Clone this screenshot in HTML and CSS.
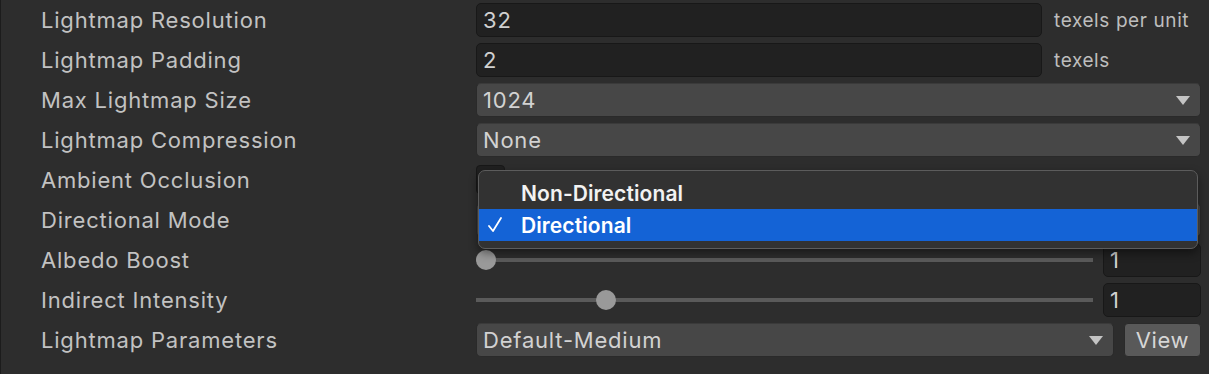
FILE: index.html
```html
<!DOCTYPE html>
<html lang="en">
<head>
  <meta charset="UTF-8">
  <title>Lightmapping Settings</title>
  <link rel="stylesheet" href="styles.css">
</head>
<body>

  <div class="inspector">
    <div class="row">
      <span class="label">Lightmap Resolution</span>
      <div class="control">
        <div class="field wide">32</div>
        <span class="suffix">texels per unit</span>
      </div>
    </div>
    <div class="row">
      <span class="label">Lightmap Padding</span>
      <div class="control">
        <div class="field wide">2</div>
        <span class="suffix">texels</span>
      </div>
    </div>
    <div class="row">
      <span class="label">Max Lightmap Size</span>
      <div class="control">
        <div class="dropdown">1024<span class="arrow"></span></div>
      </div>
    </div>
    <div class="row">
      <span class="label">Lightmap Compression</span>
      <div class="control">
        <div class="dropdown">None<span class="arrow"></span></div>
      </div>
    </div>
    <div class="row">
      <span class="label">Ambient Occlusion</span>
      <div class="control">
        <div class="toggle"></div>
      </div>
    </div>
    <div class="row">
      <span class="label">Directional Mode</span>
      <div class="control">
        <!-- covered by the open menu -->
        <div class="dropdown"><span class="arrow"></span></div>
      </div>
    </div>
    <div class="row">
      <span class="label">Albedo Boost</span>
      <div class="control">
        <div class="slider"><span class="knob" style="left: 0%"></span></div>
        <div class="field number">1</div>
      </div>
    </div>
    <div class="row">
      <span class="label">Indirect Intensity</span>
      <div class="control">
        <div class="slider"><span class="knob" style="left: 19.4%"></span></div>
        <div class="field number">1</div>
      </div>
    </div>
    <div class="row">
      <span class="label">Lightmap Parameters</span>
      <div class="control">
        <div class="dropdown">Default-Medium<span class="arrow"></span></div>
        <div class="button">View</div>
      </div>
    </div>

    <!-- open menu for Directional Mode -->
    <div class="menu">
      <div class="menu-item"><span class="check"></span>Non-Directional</div>
      <div class="menu-item selected">
        <span class="check">
          <svg width="14" height="16" viewBox="0 0 14 16"><polyline points="1,9 5,14 13,1" fill="none" stroke="#fff" stroke-width="1.8" stroke-linecap="round" stroke-linejoin="round"/></svg>
        </span>Directional
      </div>
    </div>
  </div>

</body>
</html>
```

FILE: styles.css
```css
body {
  margin: 0;
  background-color: #2d2d2d;
  font-family: Inter, "Noto Sans", sans-serif;
  color: #c4c4c4;
}
.inspector {
  position: relative;
  height: 374px;
  border-left: 1px solid #1c1c1c;
}
.row {
  display: grid;
  grid-template-columns: 475px 1fr;
  height: 40px;
  align-items: center;
}
.label {
  padding-left: 40px;
  font-size: 22px;
  letter-spacing: 0.8px;
  color: #c2c2c2;
}
.control {
  display: flex;
  align-items: center;
  gap: 10px;
  padding-right: 8px;
  height: 34px;
}
.field {
  box-sizing: border-box;
  height: 34px;
  padding: 0 6px;
  background-color: #212121;
  border: 1px solid #181818;
  border-radius: 5px;
  font-size: 22px;
  letter-spacing: 0.8px;
  color: #d0d0d0;
  display: flex;
  align-items: center;
}
.field.wide {
  width: 566px;
}
.field.number {
  width: 98px;
  flex-shrink: 0;
}
.suffix {
  margin-left: 2px;
  font-size: 19px;
  letter-spacing: 0.6px;
  color: #bdbdbd;
}
.dropdown {
  box-sizing: border-box;
  flex: 1;
  height: 34px;
  padding: 0 6px;
  background-color: #474747;
  border: 1px solid #2a2a2a;
  border-top-color: #3a3a3a;
  border-radius: 5px;
  font-size: 22px;
  letter-spacing: 0.8px;
  color: #d2d2d2;
  display: flex;
  align-items: center;
  justify-content: space-between;
}
.arrow {
  width: 0;
  height: 0;
  margin-left: auto;
  margin-right: 4px;
  border-left: 7px solid transparent;
  border-right: 7px solid transparent;
  border-top: 9px solid #c4c4c4;
}
.toggle {
  width: 27px;
  height: 27px;
  margin-top: -2px;
  background-color: #202020;
  border: 1px solid #181818;
  border-radius: 4px;
}
.slider {
  position: relative;
  flex: 1;
  height: 4px;
  background-color: #5a5a5a;
}
.knob {
  position: absolute;
  top: -8px;
  width: 20px;
  height: 20px;
  border-radius: 50%;
  background-color: #999999;
}
.button {
  box-sizing: border-box;
  width: 77px;
  height: 34px;
  background-color: #595959;
  border: 1px solid #2a2a2a;
  border-radius: 4px;
  font-size: 22px;
  letter-spacing: 0.6px;
  color: #d6d6d6;
  display: flex;
  align-items: center;
  justify-content: center;
}
.menu {
  position: absolute;
  left: 477px;
  top: 170px;
  width: 720px;
  box-sizing: border-box;
  padding: 6px 0 7px;
  background-color: #323232;
  border: 1px solid #5c5c5c;
  border-radius: 7px;
  box-shadow: 0 4px 10px rgba(0, 0, 0, 0.45);
  overflow: hidden;
}
.menu-item {
  display: flex;
  align-items: center;
  height: 32px;
  font-size: 21px;
  font-weight: 600;
  letter-spacing: 0.1px;
  color: #f2f2f2;
}
.menu-item.selected {
  background-color: #1463d6;
  color: #ffffff;
}
.check {
  width: 42px;
  padding-left: 9px;
  box-sizing: border-box;
  display: flex;
  align-items: center;
}
```
